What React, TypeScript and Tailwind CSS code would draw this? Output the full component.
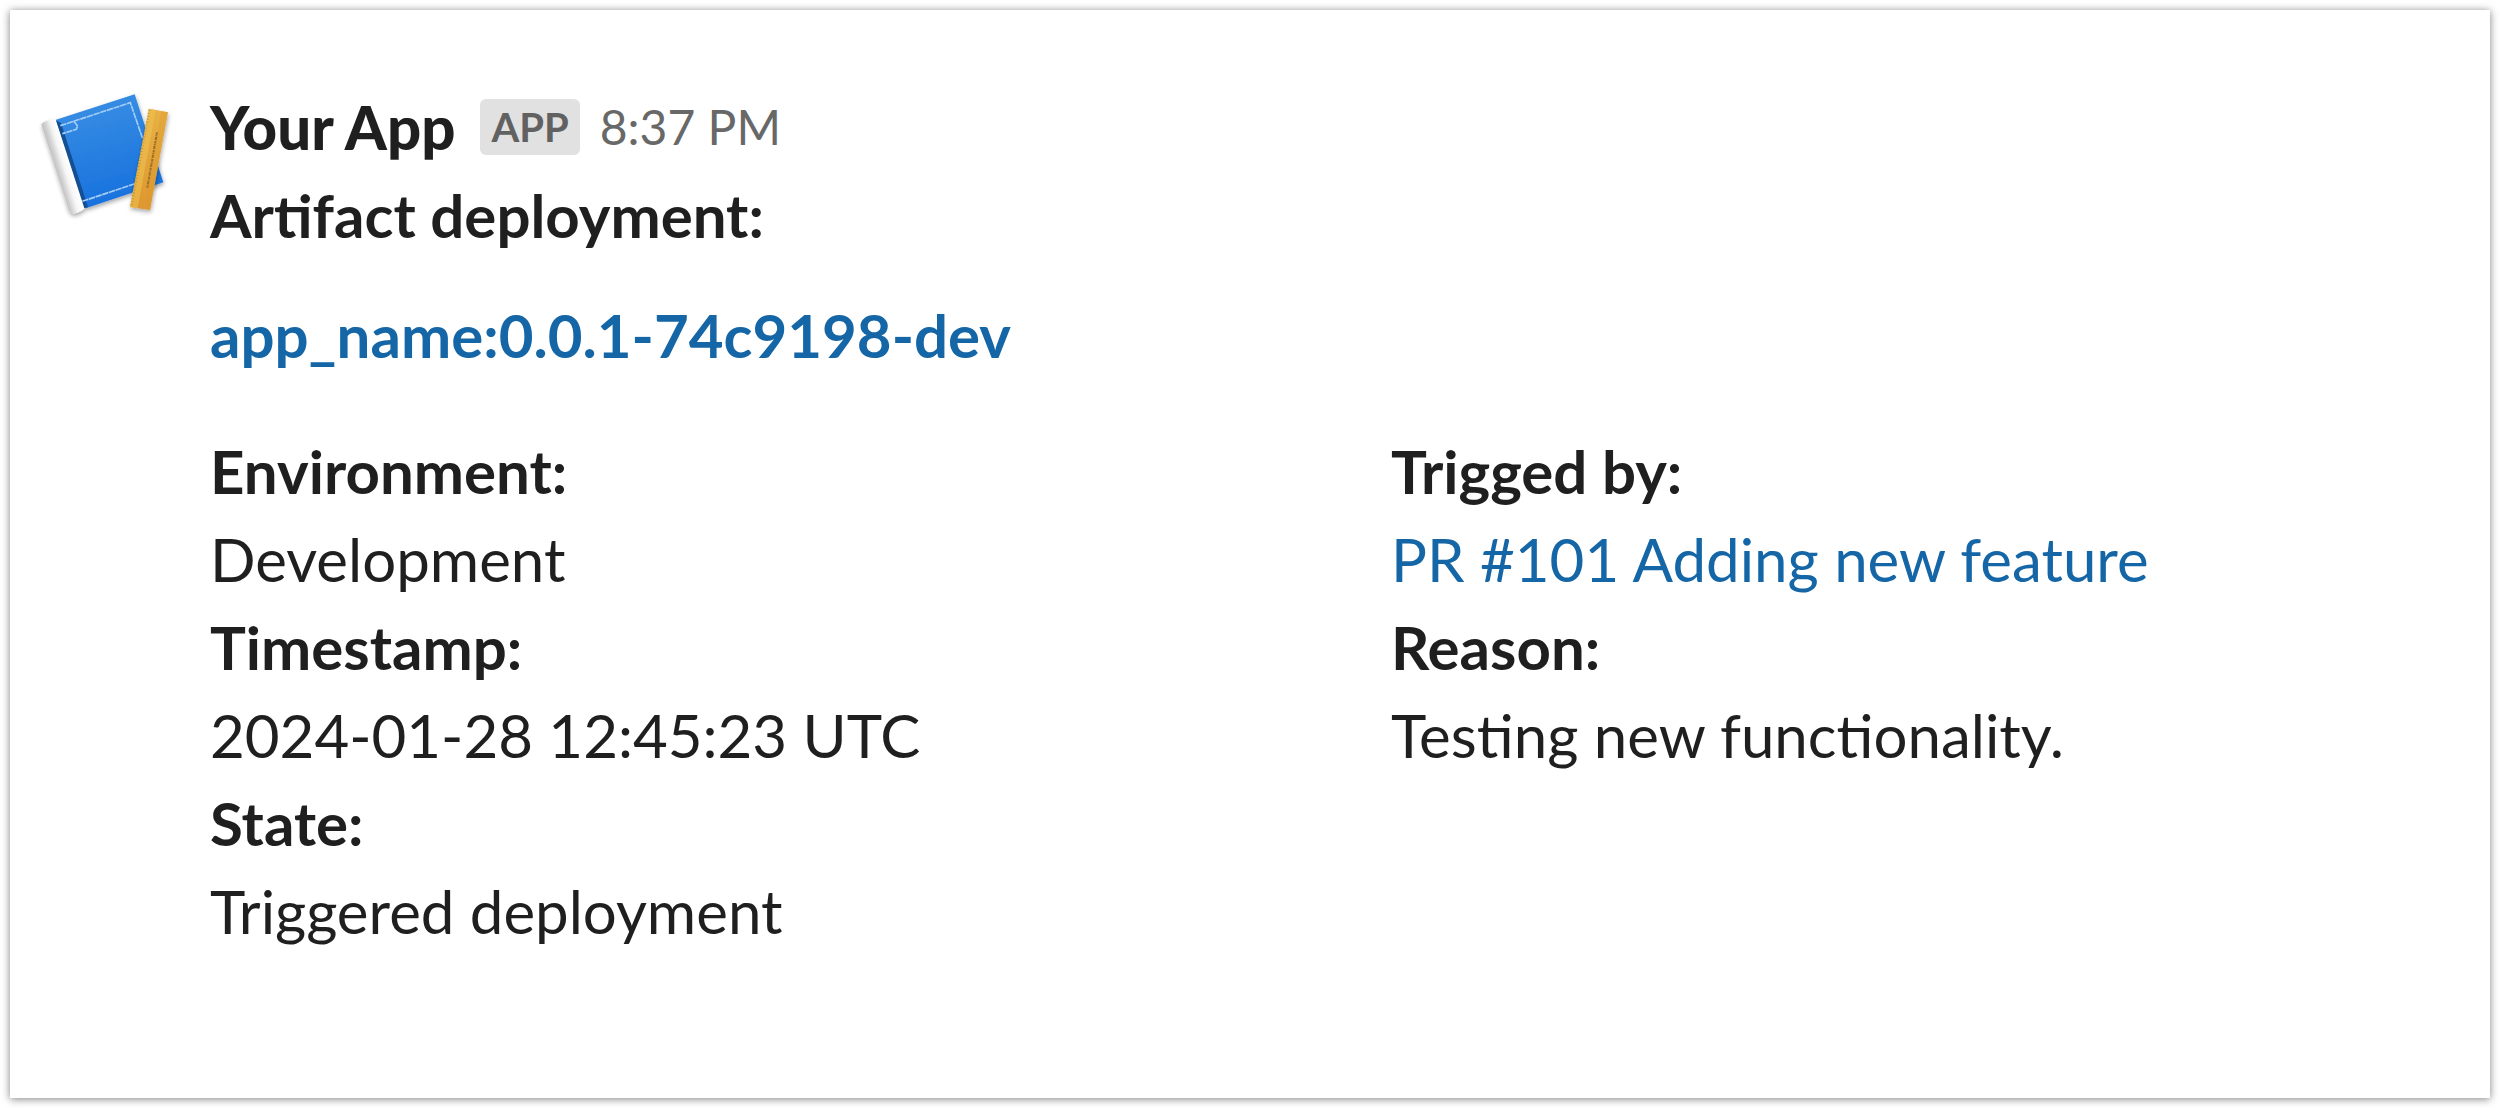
import type { ReactNode } from "react";

function AppIcon() {
  return (
    <svg className="h-[137px] w-[132px] shrink-0 overflow-visible" viewBox="114 249 396 411" role="img" aria-label="Your App">
      <defs>
        <linearGradient id="cover" x1="0.3" y1="0" x2="0.55" y2="1">
          <stop offset="0" stopColor="#3a8fe3" />
          <stop offset="1" stopColor="#1670de" />
        </linearGradient>
        <linearGradient id="spine" gradientUnits="userSpaceOnUse" x1="160" y1="508" x2="209" y2="493">
          <stop offset="0" stopColor="#b9b9b9" />
          <stop offset="0.3" stopColor="#cfcfcf" />
          <stop offset="0.65" stopColor="#f6f6f6" />
          <stop offset="1" stopColor="#ffffff" />
        </linearGradient>
        <linearGradient id="ruler" x1="0.6" y1="0" x2="0.4" y2="1">
          <stop offset="0" stopColor="#e8b044" />
          <stop offset="1" stopColor="#de9730" />
        </linearGradient>
        <filter id="soft" x="-20%" y="-20%" width="140%" height="140%">
          <feDropShadow dx="2" dy="7" stdDeviation="6" floodColor="#000000" floodOpacity="0.35" />
        </filter>
      </defs>
      <g filter="url(#soft)">
        <path d="M124 373Q134 362 151 361L169 359L254 624Q243 637 222 641Q211 640 206 630Z" fill="url(#spine)" />
        <path d="M168 359L404 283L490 547L257 625Z" fill="url(#cover)" />
      </g>
      <path d="M168 361L183 369L264 621L253 625Z" fill="#144f94" />
      <g fill="none" stroke="#a3cdf6" strokeWidth="5" strokeDasharray="19 2">
        <path d="M181 377L391 308L427 413" />
        <path d="M221 363L233 378L229 388L187 401" />
        <path d="M247 604L405 551" />
      </g>
      <path d="M447 326L504 337L450 630L390 621Z" fill="url(#ruler)" filter="url(#soft)" />
      <path d="M447 326L467 330L413 625L390 621Z" fill="#efc552" fillOpacity="0.55" />
      <path d="M484 333L504 337L450 630L434 627Z" fill="#d9982f" fillOpacity="0.35" />
      <path d="M448 330L394 619" stroke="#b98a2e" strokeWidth="7" strokeDasharray="2 7" fill="none" />
      <path d="M471 397L442 563" stroke="#9a7027" strokeWidth="6" strokeDasharray="7 2 3 2 10 3" fill="none" />
    </svg>
  );
}

function Field({ label, children }: { label: string; children: ReactNode }) {
  return (
    <div>
      <dt className="font-bold">{label}</dt>
      <dd>{children}</dd>
    </div>
  );
}

export default function App() {
  return (
    <main className="flex min-h-screen bg-white p-[10px] font-['Lato',sans-serif] text-[#1f1f1f]">
      <article className="flex grow items-start gap-10 bg-white pt-[73px] pb-20 pl-7 text-[60px] leading-[88px] shadow-[0_1px_8px_rgba(0,0,0,0.5)]">
        <AppIcon />
        <div className="grow">
          <header className="flex items-center">
            <h1 className="font-black">Your App</h1>
            <span className="ml-[25px] rounded-md bg-[#e1e1e1] px-[11px] text-[40px] leading-[56px] font-bold text-[#616161]">APP</span>
            <time className="ml-5 text-[48px] text-[#686868]">8:37 PM</time>
          </header>
          <p className="font-bold">Artifact deployment:</p>
          <p className="mt-8 font-bold">
            <a href="#" className="text-[#1566a6]">app_name:0.0.1-74c9198-dev</a>
          </p>
          <div className="mt-12 grid grid-cols-2 gap-x-[82px]">
            <dl>
              <Field label="Environment:">Development</Field>
              <Field label="Timestamp:">2024-01-28 12:45:23 UTC</Field>
              <Field label="State:">Triggered deployment</Field>
            </dl>
            <dl>
              <Field label="Trigged by:">
                <a href="#" className="text-[#1566a6]">PR #101 Adding new feature</a>
              </Field>
              <Field label="Reason:">Testing new functionality.</Field>
            </dl>
          </div>
        </div>
      </article>
    </main>
  );
}
